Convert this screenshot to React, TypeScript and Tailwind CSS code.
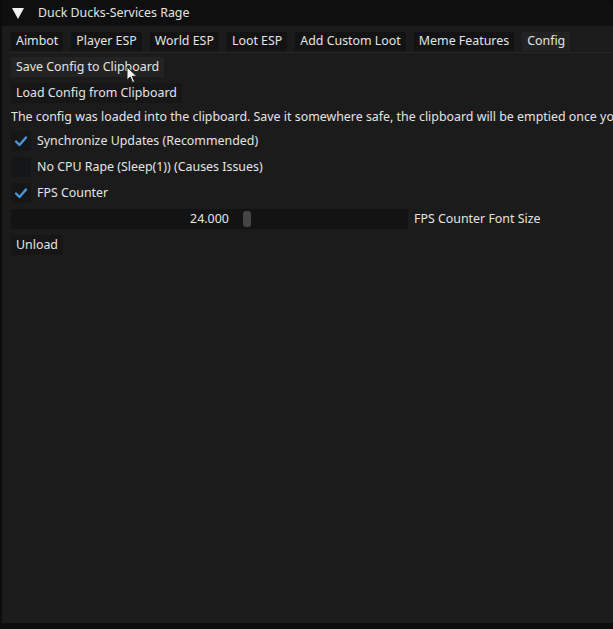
import React from 'react';

const tabs = ['Aimbot', 'Player ESP', 'World ESP', 'Loot ESP', 'Add Custom Loot', 'Meme Features', 'Config'];

const Check = () => (
  <svg width="14" height="14" viewBox="0 0 14 14">
    <path d="M2 7.5 L5.5 11 L12 3.5" fill="none" stroke="#4d97d6" strokeWidth="2.4" strokeLinecap="round" strokeLinejoin="round" />
  </svg>
);

const Checkbox = ({ checked, label }: { checked: boolean; label: string }) => (
  <div className="flex items-center h-5 gap-[6px]">
    <div className="w-[20px] h-[20px] bg-[#151618] flex items-center justify-center">{checked && <Check />}</div>
    <span>{label}</span>
  </div>
);

const Button = ({ children, hot }: { children: React.ReactNode; hot?: boolean }) => (
  <div className="flex">
    <div className={`relative h-5 px-[5px] flex items-center ${hot ? 'bg-[#232323]' : 'bg-[#161616]'}`}>{children}</div>
  </div>
);

// mouse pointer resting over the hovered button
const Pointer = () => (
  <svg className="absolute left-[115px] top-[9px]" width="12" height="18" viewBox="0 0 12 18">
    <path d="M1 1 L1 14 L4.2 11 L6.6 16.5 L8.6 15.6 L6.3 10.3 L10.8 10.3 Z" fill="#f4f4f4" stroke="#222" strokeWidth="1" strokeLinejoin="round" />
  </svg>
);

export default function App() {
  return (
    <div className="w-[613px] h-[629px] bg-[#0c0d0c] overflow-hidden" style={{ fontFamily: '"Noto Sans", sans-serif' }}>
      <div className="ml-[2px] h-[623px] bg-[#1b1b1b] rounded-tr-[10px] overflow-hidden text-[12.4px] text-[#e4e4e4] leading-none">
        {/* title bar */}
        <div className="h-[26px] bg-[#0f0f10] flex items-center pl-[10px] gap-[14px]">
          <svg width="12" height="11" viewBox="0 0 12 11">
            <path d="M0 0 H12 L6 11 Z" fill="#f2f2f2" />
          </svg>
          <span>Duck Ducks-Services Rage</span>
        </div>

        <div className="pl-[9px] pt-[6px] flex flex-col">
          {/* tab bar */}
          <div className="flex gap-[8px] border-b border-[#262626] pb-[1px]">
            {tabs.map(t => (
              <div key={t} className={`h-[19px] px-[5px] flex items-center ${t === 'Config' ? 'bg-[#222222]' : 'bg-[#131313]'}`}>{t}</div>
            ))}
          </div>

          <div className="flex flex-col gap-[6px] pt-[4px] whitespace-nowrap">
            <Button hot>
              Save Config to Clipboard
              <Pointer />
            </Button>
            <Button>Load Config from Clipboard</Button>
            <div className="h-4 flex items-center">The config was loaded into the clipboard. Save it somewhere safe, the clipboard will be emptied once you</div>
            <Checkbox checked label="Synchronize Updates (Recommended)" />
            <Checkbox checked={false} label="No CPU Rape (Sleep(1)) (Causes Issues)" />
            <Checkbox checked label="FPS Counter" />
            <div className="flex items-center gap-[6px] h-5">
              <div className="relative w-[397px] h-5 bg-[#131313] flex items-center justify-center">
                <span>24.000</span>
                <div className="absolute left-[232px] top-[2px] w-[8px] h-[16px] rounded-[3px] bg-[#444546]" />
              </div>
              <span>FPS Counter Font Size</span>
            </div>
            <Button>Unload</Button>
          </div>
        </div>
      </div>
    </div>
  );
}
